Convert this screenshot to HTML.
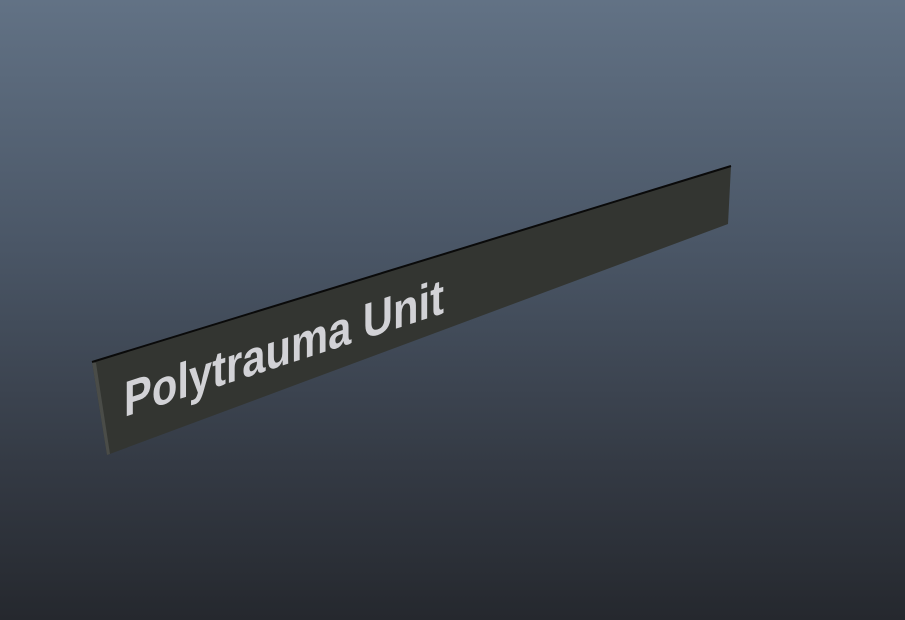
<!DOCTYPE html>
<html><head><style>
html,body{margin:0;padding:0;}
body{width:905px;height:620px;overflow:hidden;background:linear-gradient(to bottom,#627285 0%,#4a5666 40%,#343a44 75%,#25282e 100%);}
</style></head><body>
<svg width="905" height="620" viewBox="0 0 905 620" style="position:absolute;left:0;top:0">
<polygon points="92,362 731,166 728,224 107,455" fill="#333531"/>
<polygon points="92,362 96,363 110,454 107,455" fill="#4a4c48"/>
<line x1="92" y1="362" x2="731" y2="166" stroke="#0a0a0a" stroke-width="2"/>
<text x="0" y="0" transform="translate(124,417) skewY(-18)" font-family="Liberation Sans, sans-serif" font-weight="bold" font-size="50" fill="#d2d2d6" textLength="320" lengthAdjust="spacingAndGlyphs">Polytrauma Unit</text>
</svg>
</body></html>
